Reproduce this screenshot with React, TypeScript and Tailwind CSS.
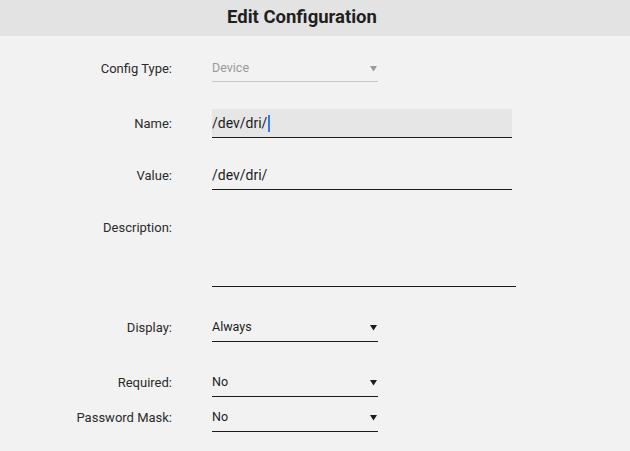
import React from 'react';

const font = { fontFamily: 'Roboto, "Noto Sans", sans-serif' };

const Label: React.FC<{ children: React.ReactNode; className?: string }> = ({ children, className = '' }) => (
  <div className={`w-[172px] shrink-0 text-right text-[13px] text-[#2b2b2b] ${className}`}>{children}</div>
);

const Arrow: React.FC<{ muted?: boolean }> = ({ muted }) => (
  <svg width="7" height="7" viewBox="0 0 7 7" className="mr-[1px]">
    <path d="M0 1h7L3.5 6.5z" fill={muted ? '#9a9a9a' : '#1c1c1c'} />
  </svg>
);

const Select: React.FC<{ value: string; muted?: boolean }> = ({ value, muted }) => (
  <div
    className={`ml-[40px] flex w-[166px] items-center justify-between border-b text-[12.5px] ${
      muted ? 'h-[26px] border-[#c9c9c9] text-[#9a9a9a]' : 'h-[29px] border-[#1c1c1c] text-[#1c1c1c]'
    }`}
  >
    <span>{value}</span>
    <Arrow muted={muted} />
  </div>
);

const EditConfiguration: React.FC = () => {
  return (
    <div className="h-[451px] w-[630px] overflow-hidden bg-[#f2f2f2]" style={font}>
      <div className="flex h-[36px] items-center justify-center bg-[#e3e3e3] pr-[26px]">
        <h1 className="text-[18.5px] font-bold text-[#1f1f1f]">Edit Configuration</h1>
      </div>

      <div className="mt-[20px] flex items-center">
        <Label>Config Type:</Label>
        <Select value="Device" muted />
      </div>

      <div className="mt-[27px] flex items-center">
        <Label>Name:</Label>
        <div className="ml-[40px] flex h-[29px] w-[300px] items-center border-b border-[#1c1c1c] bg-[#e6e6e6] text-[14px] text-[#1c1c1c]">
          <span>/dev/dri/</span>
          <span className="ml-[1px] h-[17px] w-[2px] bg-[#3478f6]" />
        </div>
      </div>

      <div className="mt-[23px] flex items-center">
        <Label>Value:</Label>
        <div className="ml-[40px] flex h-[29px] w-[300px] items-center border-b border-[#1c1c1c] text-[14px] text-[#1c1c1c]">
          /dev/dri/
        </div>
      </div>

      <div className="mt-[22px] flex items-start">
        <Label className="pt-[6px]">Description:</Label>
        <div className="ml-[40px] h-[75px] w-[304px] border-b border-[#1c1c1c]" />
      </div>

      <div className="mt-[26px] flex items-center">
        <Label>Display:</Label>
        <Select value="Always" />
      </div>

      <div className="mt-[26px] flex items-center">
        <Label>Required:</Label>
        <Select value="No" />
      </div>

      <div className="mt-[6px] flex items-center">
        <Label>Password Mask:</Label>
        <Select value="No" />
      </div>
    </div>
  );
};

export default function App() {
  return <EditConfiguration />;
}
